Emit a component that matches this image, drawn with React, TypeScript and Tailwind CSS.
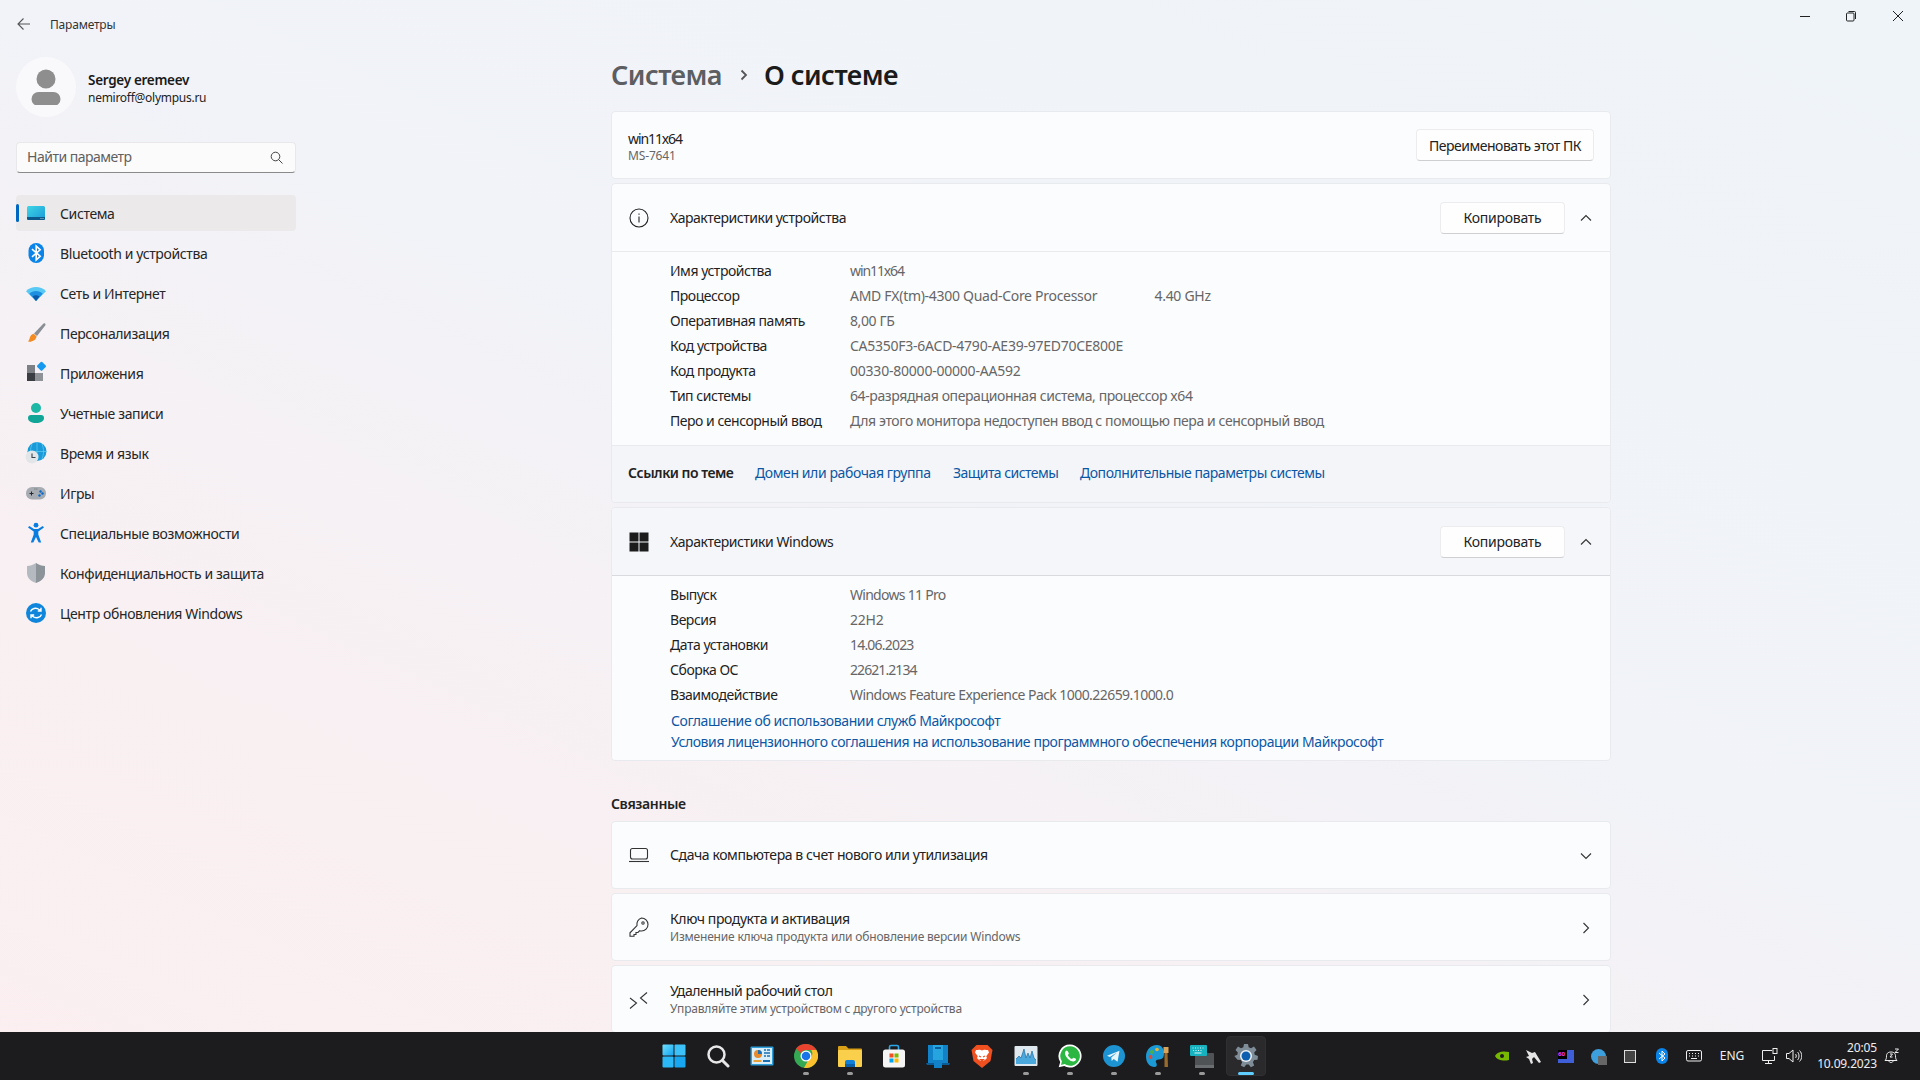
import React from "react";

const font = "font-['Noto_Sans','Open_Sans',sans-serif]";

function Ic({ s = 24, children, className = "" }: { s?: number; children: React.ReactNode; className?: string }) {
  return (
    <svg width={s} height={s} viewBox="0 0 24 24" fill="none" className={"shrink-0 " + className}>
      {children}
    </svg>
  );
}

const SysIcon = () => (
  <Ic>
    <defs>
      <linearGradient id="sys" x1="0" y1="0" x2="1" y2="1">
        <stop offset="0" stopColor="#3fd6e6" />
        <stop offset="1" stopColor="#1a9ad8" />
      </linearGradient>
    </defs>
    <rect x="3" y="5" width="18" height="14" rx="1.500" fill="url(#sys)" />
    <path d="M3 16h18v1.500a1.500 1.500 0 0 1-1.500 1.500h-15A1.500 1.500 0 0 1 3 17.500z" fill="#0c5a8c" />
    <path d="M16.500 17.500h1M18.500 17.500h1" stroke="#cfe8f4" strokeWidth=".8" />
  </Ic>
);
const BtIcon = () => (
  <Ic>
    <rect x="4.500" y="2" width="15.500" height="20" rx="7.700" fill="#0a84e8" />
    <path d="M8 8.200l8.200 7-4 3.800V5l4 3.800-8.200 7" stroke="#fff" strokeWidth="1.600" />
  </Ic>
);
const WifiIcon = () => (
  <Ic>
    <path d="M2 10.200C7.500 4.600 16.500 4.600 22 10.200L12 20z" fill="#58c8f5" />
    <path d="M5.300 12.800c3.800-3.600 9.600-3.600 13.400 0L12 20z" fill="#1c8fe0" />
    <path d="M8.600 15.400c2-1.700 4.800-1.700 6.800 0L12 20z" fill="#0b57a8" />
  </Ic>
);
const BrushIcon = () => (
  <Ic>
    <path d="M21 2.500c.7.600.7 1.300.2 2L13 15l-3-2.600L19 3c.6-.7 1.300-1 2-.5z" fill="#8a8f96" />
    <path d="M9.700 12.800l2.900 2.600c-.7 3.200-3.500 5.600-8.600 5.200 1.300-1.200 1.400-2.600 2-4.300.5-1.600 1.800-3 3.700-3.500z" fill="#f38a22" />
  </Ic>
);
const AppsIcon = () => (
  <Ic>
    <rect x="3" y="4" width="8" height="8" fill="#7d8186" />
    <rect x="3" y="12" width="8" height="8" fill="#3a3d42" />
    <rect x="11" y="12" width="8" height="8" fill="#8f9398" />
    <rect x="14" y="1.800" width="7" height="7" rx="1" transform="rotate(45 17.500 5.300)" fill="#1899f0" />
  </Ic>
);
const UserIcon = () => (
  <Ic>
    <circle cx="12" cy="7" r="5" fill="#1db7a6" />
    <path d="M4 17a3 3 0 0 1 3-3h10a3 3 0 0 1 3 3c0 3.500-3.500 5-8 5s-8-1.500-8-5z" fill="#10a596" />
  </Ic>
);
const TimeIcon = () => (
  <Ic>
    <circle cx="13" cy="10.500" r="9.500" fill="#1a9ad8" />
    <path d="M13 1v19M3.500 10.500h19M8 3c-2 5-2 10 0 15M18 3c2 5 2 10 0 15" stroke="#62d0f2" strokeWidth=".7" />
    <circle cx="8" cy="16" r="6.500" fill="#e3e6e8" />
    <path d="M8 12.500V16.500h3.500" stroke="#3c4146" strokeWidth="1.100" />
  </Ic>
);
const GameIcon = () => (
  <Ic>
    <rect x="2" y="6" width="20" height="12.500" rx="6" fill="#a6acb2" />
    <path d="M5.500 12.500h4M7.500 10.500v4" stroke="#26292c" strokeWidth="1" />
    <circle cx="16.500" cy="10.500" r="1.200" fill="#0a67c8" />
    <circle cx="18.500" cy="12.500" r="1.200" fill="#0a67c8" />
    <circle cx="15.500" cy="14.500" r="1.200" fill="#0a67c8" />
    <path d="M10.500 8h.8M12.500 8h.8" stroke="#444" strokeWidth=".8" />
  </Ic>
);
const AccIcon = () => (
  <Ic>
    <circle cx="12" cy="4.200" r="2.400" fill="#0a7ee0" />
    <path d="M4 6.500l5.700 4v3L6.800 21.500h2.500L12 16l2.700 5.500h2.500l-2.900-8v-3L20 6.500l-1.300-1.400-4.700 3h-4L5.300 5.100z" fill="#0a7ee0" />
  </Ic>
);
const ShieldIcon = () => (
  <Ic>
    <path d="M12 2c3 2 6 3 9 3v7c0 5-4 8.500-9 10z" fill="#8c9399" />
    <path d="M12 2C9 4 6 5 3 5v7c0 5 4 8.500 9 10z" fill="#b4babf" />
  </Ic>
);
const UpdateIcon = () => (
  <Ic>
    <circle cx="12" cy="12" r="10" fill="#0f86dc" />
    <path d="M6.500 10.500c1-3 5.500-4.500 9-1.700l1.500 1.200M17 6.800V10h-3.200M17.500 13.500c-1 3-5.500 4.500-9 1.700L7 14M7 17.200V14h3.200" stroke="#fff" strokeWidth="1.400" />
  </Ic>
);

const Win = () => (
  <svg width="24" height="24" viewBox="0 0 24 24">
    <defs>
      <linearGradient id="w" x1="0" y1="0" x2="1" y2="1">
        <stop offset="0" stopColor="#6fe0ff" />
        <stop offset="1" stopColor="#14a4f0" />
      </linearGradient>
    </defs>
    <rect x="0.500" y="0.500" width="11" height="11" rx="1" fill="url(#w)" />
    <rect x="12.500" y="0.500" width="11" height="11" rx="1" fill="#3cc2f8" />
    <rect x="0.500" y="12.500" width="11" height="11" rx="1" fill="#2ab8f6" />
    <rect x="12.500" y="12.500" width="11" height="11" rx="1" fill="#18a6f0" />
  </svg>
);
const Search = () => (
  <Ic>
    <circle cx="10.500" cy="10.500" r="8" stroke="#e8e8e8" strokeWidth="2.500" />
    <path d="M16.500 16.500l5.500 5.500" stroke="#e8e8e8" strokeWidth="3" strokeLinecap="round" />
  </Ic>
);
const Widgets = () => (
  <Ic>
    <rect x="0.500" y="2.500" width="23" height="19" rx="1" fill="#2f9fdc" />
    <rect x="2" y="4" width="20" height="16" fill="#d8eef8" />
    <circle cx="8" cy="10" r="4" fill="#e88b2c" />
    <path d="M8 10V6a4 4 0 0 1 4 4z" fill="#1d6fb0" />
    <path d="M14 6h2M17 6h3M14 9h6M14 12h2M17 12h3" stroke="#1d6fb0" strokeWidth="1.300" />
    <rect x="3.500" y="16" width="8" height="2" fill="#e8a33c" />
    <rect x="13" y="16" width="7" height="2" fill="#1d6fb0" />
  </Ic>
);
const Chrome = () => (
  <Ic>
    <circle cx="12" cy="12" r="12" fill="#35a853" />
    <path d="M12 0a12 12 0 0 1 10.400 6H12a6 6 0 0 0-5.200 3L2 4.500A12 12 0 0 1 12 0z" fill="#e8432f" />
    <path d="M22.400 6A12 12 0 0 1 10 23.800l5-8.800a6 6 0 0 0 2.200-8.900z" fill="#fbc02d" />
    <circle cx="12" cy="12" r="5.500" fill="#fff" />
    <circle cx="12" cy="12" r="4.300" fill="#1a73e8" />
  </Ic>
);
const Folder = () => (
  <Ic>
    <path d="M0 3a1 1 0 0 1 1-1h7l2.500 2.500H23a1 1 0 0 1 1 1V9H0z" fill="#d9a017" />
    <rect x="0" y="6" width="24" height="17" rx="1" fill="#f9cf4c" />
    <path d="M7 18a2 2 0 0 1 2-2h6a2 2 0 0 1 2 2v5H7z" fill="#0f7fd8" />
    <rect x="7" y="20" width="10" height="3" fill="#0b5ea8" />
  </Ic>
);
const Store = () => (
  <Ic>
    <path d="M7.500 6V3a1.500 1.500 0 0 1 1.500-1.500h6A1.500 1.500 0 0 1 16.500 3v3" stroke="#2aa7e8" strokeWidth="1.600" />
    <rect x="1" y="5.500" width="22" height="18" rx="2.500" fill="#f5f5f5" />
    <rect x="7.500" y="9.500" width="4" height="4" fill="#f25022" />
    <rect x="12.500" y="9.500" width="4" height="4" fill="#7fba00" />
    <rect x="7.500" y="14.500" width="4" height="4" fill="#00a4ef" />
    <rect x="12.500" y="14.500" width="4" height="4" fill="#ffb900" />
  </Ic>
);
const BlueApp = () => (
  <Ic>
    <path d="M2 1h20v18H2z" fill="#1182c8" />
    <path d="M7 1h10v15H7z" fill="#26a4e0" />
    <path d="M0 19h24l-1 2H1z" fill="#0a5c98" />
    <path d="M8 19h8v5H8z" fill="#1182c8" />
    <path d="M9 3h6v2H9z" fill="#0a5c98" />
  </Ic>
);
const Brave = () => (
  <Ic>
    <path d="M6.500 1h11L20 3.500 22.500 6 20.500 17 12 24 3.500 17 1.500 6 4 3.500z" fill="#f0501f" />
    <path d="M12 6.500c-1 0-1.500-.7-3-.7-1.200 0-2.200.5-3 .2L5 8.500l2.800 3.700L7 14c1 1.200 3 3 5 3s4-1.800 5-3l-.8-1.800L19 8.500 18 6c-.8.300-1.800-.2-3-.2-1.500 0-2 .7-3 .7z" fill="#fff" />
    <path d="M9 12l2 1M15 12l-2 1M10.500 15.500h3L12 17z" stroke="#f0501f" strokeWidth="1.200" />
  </Ic>
);
const TaskMgr = () => (
  <Ic>
    <rect x="0.500" y="2" width="23" height="20" rx="1" fill="#dfe8ee" />
    <path d="M2 20V15l3-3 2 2 3-9 2 9 2-5 2 5 2-7 2 7 2 2v4z" fill="#4ba8dc" />
    <path d="M2 15l3-3 2 2 3-9 2 9 2-5 2 5 2-7 2 7 2 2" stroke="#1f6fa8" strokeWidth=".7" />
  </Ic>
);
const WhatsApp = () => (
  <Ic>
    <path d="M12 .5A11.500 11.500 0 0 0 2.200 18L.7 23.300l5.500-1.400A11.500 11.500 0 1 0 12 .5z" fill="#fff" />
    <path d="M12 2.300A9.700 9.700 0 0 0 3.900 17.300L3 20.900l3.700-.9A9.700 9.700 0 1 0 12 2.300z" fill="#2bb741" />
    <path d="M8.800 6.500c-.6 0-1.800 1-1.800 2.800 0 2 1.300 3.800 2.600 5.200 1.700 1.700 4 3 5.600 3 1.700 0 2.800-1.200 2.900-2.300 0-.4-2.200-1.500-2.700-1.500-.5 0-1 1.200-1.500 1.200-1.200 0-4-2.600-4-3.800 0-.5.900-1 .9-1.500 0-.6-1.200-3.100-2-3.100z" fill="#fff" />
  </Ic>
);
const Telegram = () => (
  <Ic>
    <circle cx="12" cy="12" r="11" fill="#1d93d2" />
    <path d="M5 11.800l12.500-5-2 11-3.800-2.700-2 1.900-.4-3.400 5.700-5-7.200 4.300z" fill="#e8f5fb" />
  </Ic>
);
const Palette = () => (
  <Ic>
    <path d="M11 1C4 1 0 6.500 0 12.500 0 19 4 23 8.500 23c3 0 2.500-3 1.500-4.500-.9-1.500.5-3 2.500-3 2.500 0 5.500-.5 5.500-6C18 4 15 1 11 1z" fill="#1b9ad6" />
    <circle cx="6" cy="8" r="2" fill="#47b04b" />
    <circle cx="11" cy="5.500" r="1.800" fill="#e9b52c" />
    <circle cx="4.500" cy="13" r="1.900" fill="#e8472f" />
    <path d="M18.500 9h3l.5 14h-3.500z" fill="#9a6a2d" />
    <path d="M17.500 3h5v6h-5z" fill="#d8a35a" />
  </Ic>
);
const KeyPad = () => (
  <Ic>
    <rect x="5" y="9" width="19" height="15" rx="1" fill="#4f5356" />
    <rect x="5" y="21" width="19" height="3" fill="#6a6e71" />
    <rect x="0" y="1" width="17" height="11" rx="1" fill="#16b2c0" />
    <path d="M2.500 4h1M5 4h1M7.500 4h1M10 4h1M12.500 4h1M3 6.500h1M5.500 6.500h1M8 6.500h1M10.500 6.500h1M4.500 9h7" stroke="#d8f6f8" strokeWidth="1.100" />
  </Ic>
);
const Gear = () => (
  <svg width="24" height="24" viewBox="0 0 24 24">
    <path d="M10 0h4l.7 3.300 2.300 1L20 2.500 22.500 6l-2.300 2.400.5 2.400 3.300 1.200-.5 3.700-3.400.4-1.200 2.200 1.300 3.100-3.300 1.800-2.200-2.700h-2.400l-2.200 2.700-3.300-1.800 1.300-3.100-1.200-2.200-3.400-.4L.3 12l3-1.200.5-2.400L1.500 6 4 2.500 7 4.300l2.300-1z" fill="#7f8d99" />
    <circle cx="12" cy="12" r="6" fill="#eef3f6" />
    <circle cx="12" cy="12" r="4.500" fill="#0f5fb0" />
  </svg>
);

const nav: [React.ReactNode, string][] = [
  [<SysIcon />, "Система"],
  [<BtIcon />, "Bluetooth и устройства"],
  [<WifiIcon />, "Сеть и Интернет"],
  [<BrushIcon />, "Персонализация"],
  [<AppsIcon />, "Приложения"],
  [<UserIcon />, "Учетные записи"],
  [<TimeIcon />, "Время и язык"],
  [<GameIcon />, "Игры"],
  [<AccIcon />, "Специальные возможности"],
  [<ShieldIcon />, "Конфиденциальность и защита"],
  [<UpdateIcon />, "Центр обновления Windows"],
];

function Sidebar() {
  return (
    <aside className="w-[296px] ml-4 shrink-0 flex flex-col">
      <div className="h-[48px] flex items-center gap-[18px]">
        <svg width="16" height="16" viewBox="0 0 16 16" fill="none" stroke="#555" strokeWidth="1.100">
          <path d="M14 8H2M7.500 2.500L2 8l5.500 5.500" />
        </svg>
        <span className="text-[12px] pt-[1px] text-[#333] tracking-[-0.2px]">Параметры</span>
      </div>
      <div className="flex items-center mt-[9px] h-[60px]">
        <div className="w-[60px] h-[60px] rounded-full bg-[#f9f9fb] flex items-center justify-center">
          <svg width="30" height="36" viewBox="0 0 30 36" fill="#8e8e8e">
            <circle cx="15" cy="10" r="9.500" />
            <rect x="0.500" y="23" width="29" height="14" rx="7" />
          </svg>
        </div>
        <div className="ml-[12px] pt-[2px] flex flex-col">
          <span className="text-[13.500px] leading-[18px] font-semibold text-[#1a1a1a] tracking-[-0.3px]">Sergey eremeev</span>
          <span className="text-[12px] leading-[17px] text-[#222] tracking-[-0.27px]">nemiroff@olympus.ru</span>
        </div>
      </div>
      <div className="mt-[25px] h-[31px] w-[280px] rounded-[4px] bg-[#fbfbfc] border border-[#e8e8ea] border-b-[#8a8a8a] flex items-center justify-between pl-[10px] pr-[12px]">
        <span className="text-[14px] text-[#5f5f5f] tracking-[-0.5px] -mt-[2px]">Найти параметр</span>
        <svg width="13" height="13" viewBox="0 0 13 13" fill="none" stroke="#444" strokeWidth="1">
          <circle cx="5.500" cy="5.500" r="4.300" />
          <path d="M8.500 8.500l4 4" />
        </svg>
      </div>
      <nav className="mt-[22px] flex flex-col gap-1 w-[280px]">
        {nav.map(([icon, label], i) => (
          <div key={label} className={"relative h-9 flex items-center rounded-[4px] pl-[8px] gap-[12px] " + (i === 0 ? "bg-[#ece9eb]" : "")}>
            {i === 0 && <span className="absolute left-0 top-[9px] h-[18px] w-[3px] rounded-full bg-[#0067c0]" />}
            {icon}
            <span className="text-[14px] text-[#262626] tracking-[-0.38px]">{label}</span>
          </div>
        ))}
      </nav>
    </aside>
  );
}

function Row({ k, v, extra, t = "tracking-[-0.39px]" }: { k: string; v: string; extra?: string; t?: string }) {
  return (
    <div className="h-[25px] flex items-center text-[14px]">
      <span className="w-[180px] text-[#1f1f1f] tracking-[-0.47px]">{k}</span>
      <span className={"text-[#666] " + t + (extra ? " w-[304.500px]" : "")}>{v}</span>
      {extra && <span className="text-[#666] tracking-[-0.3px]">{extra}</span>}
    </div>
  );
}

function Btn({ children, w, t = "tracking-[-0.25px]" }: { children: React.ReactNode; w: string; t?: string }) {
  return (
    <div className={"h-8 rounded-[4px] bg-[#fefefe] border border-[#ececee] border-b-[#cfcfd2] flex items-center justify-center text-[14px] text-[#222] " + t + " " + w}>
      {children}
    </div>
  );
}

const Up = () => (
  <svg width="12" height="12" viewBox="0 0 12 12" fill="none" stroke="#333" strokeWidth="1.100" className="ml-[15px] mr-[6px]">
    <path d="M1 8.500L6 3.500l5 5" />
  </svg>
);
const Cv = ({ d }: { d: string }) => (
  <svg width="12" height="12" viewBox="0 0 12 12" fill="none" stroke="#333" strokeWidth="1.100" className="mr-[6px] mt-[1px]">
    <path d={d} />
  </svg>
);
const cardC = "rounded-[4px] border border-[#e8eaee] bg-[#fbfcfe]";
const link = "text-[14px] text-[#0b57a4] tracking-[-0.4px]";

function LinkRow({ icon, title, sub, d }: { icon: React.ReactNode; title: string; sub?: string; d: string }) {
  return (
    <div className={cardC + " h-[68px] shrink-0 flex items-center pl-[17px] pr-[12px]"}>
      <span className="w-[41px] shrink-0">{icon}</span>
      <div className="flex-1 flex flex-col">
        <span className="text-[14px] leading-[20px] text-[#222] tracking-[-0.41px]">{title}</span>
        {sub && <span className="text-[12px] leading-[16px] text-[#666] tracking-[-0.19px]">{sub}</span>}
      </div>
      <Cv d={d} />
    </div>
  );
}

function Content() {
  return (
    <main className="w-[1000px] ml-[299px] shrink-0 flex flex-col overflow-hidden">
      <div className="h-[111px] shrink-0 flex items-center pt-[38px] text-[27px] font-semibold leading-none tracking-[-0.55px]">
        <span className="text-[#5c5e61]">Система</span>
        <svg width="10" height="12" viewBox="0 0 10 12" fill="none" stroke="#555" strokeWidth="1.800" className="ml-[17px] mr-[15px]">
          <path d="M2.500 1.500L7 6l-4.500 4.500" />
        </svg>
        <span className="text-[#1b1b1b]">О системе</span>
      </div>
      <div className={cardC + " h-[68px] shrink-0 flex items-center justify-between pl-[16px] pr-[16px]"}>
        <div className="flex flex-col pt-[2px]">
          <span className="text-[14px] leading-[19px] text-[#222] tracking-[-1.100px]">win11x64</span>
          <span className="text-[12px] leading-[16px] text-[#666] tracking-[-0.15px]">MS-7641</span>
        </div>
        <Btn w="w-[178px]" t="tracking-[-0.48px]">Переименовать этот ПК</Btn>
      </div>
      <div className={cardC + " mt-1 shrink-0 overflow-hidden"}>
        <div className="h-[68px] flex items-center pl-[17px] pr-[12px] border-b border-[#e8eaee]">
          <span className="w-[41px]">
            <svg width="20" height="20" viewBox="0 0 20 20" fill="none" stroke="#222" strokeWidth="1.100">
              <circle cx="10" cy="10" r="9" />
              <path d="M10 8.500V14.500M10 5.500v1.300" />
            </svg>
          </span>
          <span className="flex-1 text-[14px] text-[#222] tracking-[-0.46px]">Характеристики устройства</span>
          <Btn w="w-[125px]">Копировать</Btn>
          <Up />
        </div>
        <div className="pl-[58px] pt-[6px] h-[193px]">
          <Row k="Имя устройства" v="win11x64" t="tracking-[-1.100px]" />
          <Row k="Процессор" v="AMD FX(tm)-4300 Quad-Core Processor" extra="4.40 GHz" t="tracking-[-0.29px]" />
          <Row k="Оперативная память" v="8,00 ГБ" />
          <Row k="Код устройства" v="CA5350F3-6ACD-4790-AE39-97ED70CE800E" t="tracking-[-0.25px]" />
          <Row k="Код продукта" v="00330-80000-00000-AA592" t="tracking-[-0.22px]" />
          <Row k="Тип системы" v="64-разрядная операционная система, процессор x64" />
          <Row k="Перо и сенсорный ввод" v="Для этого монитора недоступен ввод с помощью пера и сенсорный ввод" />
        </div>
        <div className="h-[57px] pb-[4px] border-t border-[#e8eaee] bg-[#f3f5f8] flex items-center pl-[16px]">
          <span className="w-[127px] text-[14px] font-semibold text-[#222] tracking-[-0.5px]">Ссылки по теме</span>
          <span className={link + " w-[198px]"}>Домен или рабочая группа</span>
          <span className={link + " w-[127px] tracking-[-0.55px]"}>Защита системы</span>
          <span className="text-[14px] text-[#0b57a4] tracking-[-0.46px]">Дополнительные параметры системы</span>
        </div>
      </div>
      <div className={cardC + " mt-1 shrink-0 overflow-hidden"}>
        <div className="h-[68px] flex items-center pl-[17px] pr-[12px] border-b border-[#d8dadf] bg-[#f4f6fa]">
          <span className="w-[41px]">
            <svg width="20" height="20" viewBox="0 0 20 20" fill="#1c1c1c">
              <rect x="0.500" y="0.500" width="9" height="9" />
              <rect x="10.500" y="0.500" width="9" height="9" />
              <rect x="0.500" y="10.500" width="9" height="9" />
              <rect x="10.500" y="10.500" width="9" height="9" />
            </svg>
          </span>
          <span className="flex-1 text-[14px] text-[#222] tracking-[-0.42px]">Характеристики Windows</span>
          <Btn w="w-[125px]">Копировать</Btn>
          <Up />
        </div>
        <div className="pl-[58px] pt-[6px] h-[184px] flex flex-col">
          <Row k="Выпуск" v="Windows 11 Pro" t="tracking-[-0.72px]" />
          <Row k="Версия" v="22H2" t="tracking-[-0.22px]" />
          <Row k="Дата установки" v="14.06.2023" t="tracking-[-0.8px]" />
          <Row k="Сборка ОС" v="22621.2134" t="tracking-[-0.92px]" />
          <Row k="Взаимодействие" v="Windows Feature Experience Pack 1000.22659.1000.0" t="tracking-[-0.56px]" />
          <span className={link + " leading-[21px] mt-[3px] pl-[1px]"}>Соглашение об использовании служб Майкрософт</span>
          <span className={link + " leading-[21px] pl-[1px]"}>Условия лицензионного соглашения на использование программного обеспечения корпорации Майкрософт</span>
        </div>
      </div>
      <div className="h-[60px] shrink-0 flex items-end pb-[7px] text-[14px] font-semibold text-[#222] tracking-[-0.38px]">Связанные</div>
      <div className="flex flex-col gap-1">
        <LinkRow
          d="M1 3.500L6 8.500l5-5"
          title="Сдача компьютера в счет нового или утилизация"
          icon={
            <svg width="20" height="20" viewBox="0 0 20 20" fill="none" stroke="#333" strokeWidth="1.100">
              <rect x="1.500" y="3.500" width="17" height="10.500" rx="2" />
              <path d="M0 16.500h20" />
            </svg>
          }
        />
        <LinkRow
          d="M3.500 1l5 5-5 5"
          title="Ключ продукта и активация"
          sub="Изменение ключа продукта или обновление версии Windows"
          icon={
            <svg width="20" height="20" viewBox="0 0 20 20" fill="none" stroke="#333" strokeWidth="1.100">
              <path d="M12.500 1a6.500 6.500 0 0 1 0 13c-.7 0-1.300-.1-1.800-.3L9 15.500H7v2H5v1.800H1v-3.500l7-7.100A6.500 6.500 0 0 1 12.500 1z" />
              <circle cx="14" cy="6" r="1.200" />
            </svg>
          }
        />
        <LinkRow
          d="M3.500 1l5 5-5 5"
          title="Удаленный рабочий стол"
          sub="Управляйте этим устройством с другого устройства"
          icon={
            <svg width="20" height="20" viewBox="0 0 20 20" fill="none" stroke="#333" strokeWidth="1.100">
              <path d="M1 9l6.500 5L1 19.500M18 3.500L11.500 9l6.500 5.500" />
            </svg>
          }
        />
      </div>
    </main>
  );
}

const apps: [React.ReactNode, boolean][] = [
  [<Win />, false],
  [<Search />, false],
  [<Widgets />, false],
  [<Chrome />, true],
  [<Folder />, true],
  [<Store />, false],
  [<BlueApp />, false],
  [<Brave />, false],
  [<TaskMgr />, true],
  [<WhatsApp />, true],
  [<Telegram />, true],
  [<Palette />, true],
  [<KeyPad />, true],
];

function Taskbar() {
  return (
    <footer className="h-[48px] shrink-0 bg-[#1c1c1f] grid grid-cols-[1fr_auto_1fr] items-center text-white">
      <div />
      <div className="flex h-full items-center">
        {apps.map(([ic, dot], i) => (
          <div key={i} className="relative w-[44px] h-[40px] flex items-center justify-center">
            {ic}
            {dot && <span className="absolute bottom-[1px] left-[19px] w-[6px] h-[3px] rounded-full bg-[#9a9a9a]" />}
          </div>
        ))}
        <div className="relative w-[44px] h-[40px] flex items-center justify-center">
          <div className="absolute inset-x-[2px] inset-y-0 rounded-[4px] bg-[#2a2a2d] border border-[#303033]" />
          <span className="relative"><Gear /></span>
          <span className="absolute bottom-[1px] left-[14px] w-[16px] h-[3px] rounded-full bg-[#60cdff]" />
        </div>
      </div>
      <div className="flex items-center justify-end h-full">
        <div className="w-[32px] flex justify-center"><svg width="14" height="10" viewBox="0 0 14 10"><path d="M0 5c3-5 9-5 14-4v8C9 10 3 10 0 5z" fill="#76b900" /><circle cx="7" cy="5" r="2" fill="#1c1c1f" /></svg></div>
        <div className="w-[32px] flex justify-center"><svg width="16" height="16" viewBox="0 0 16 16"><path d="M0 2l6 3 3-1 6 10-2 1-5-6-2 2 1 4-2 1-2-5-3-2 3-1z" fill="#e4e4e4" /></svg></div>
        <div className="w-[32px] flex justify-center"><div className="relative w-[16px] h-[13px] bg-[#3f5fd8]"><span className="absolute left-0 top-0 w-[9px] h-[9px] bg-black text-[#ff3cf0] text-[6px] leading-[9px] font-bold">60</span></div></div>
        <div className="w-[32px] flex justify-center"><div className="relative w-[15px] h-[15px] rounded-full bg-[#3d9fdc]"><span className="absolute right-[-1px] bottom-[-1px] w-[9px] h-[9px] bg-[#666]" /></div></div>
        <div className="w-[32px] flex justify-center"><div className="w-[12px] h-[13px] bg-[#444] border border-[#ddd]" /></div>
        <div className="w-[32px] flex justify-center"><svg width="12" height="16" viewBox="0 0 12 16"><rect width="12" height="16" rx="6" fill="#0a84e8" /><path d="M3 5l6 5-3 3V3l3 3-6 5" stroke="#fff" strokeWidth="1" fill="none" /></svg></div>
        <div className="w-[32px] flex justify-center"><svg width="16" height="12" viewBox="0 0 16 12" fill="none" stroke="#eee" strokeWidth="1"><rect x=".5" y=".5" width="15" height="10.500" rx="1.500" /><path d="M3 3.500h1M6 3.500h1M9 3.500h1M12 3.500h1M3 6h1M6 6h1M9 6h1M12 6h1M5 8.500h6" /></svg></div>
        <span className="w-[44px] text-center text-[12px] text-[#eee]">ENG</span>
        <div className="w-[32px] flex justify-center"><svg width="16" height="16" viewBox="0 0 16 16" fill="none" stroke="#eee" strokeWidth="1"><path d="M10 2.500H.5v10h12V8M6.500 12.500v3M3 15.500h7" /><rect x="11" y=".5" width="4" height="5" /></svg></div>
        <div className="w-[16px] flex justify-center"><svg width="16" height="14" viewBox="0 0 16 14" fill="none" stroke="#eee" strokeWidth="1"><path d="M.5 4.500h2.500L7 1v12L3 9.500H.5zM9.500 5c1 1 1 3 0 4M11.500 3c2 2 2 6 0 8M13.500 1.500c3 3 3 8 0 11" /></svg></div>
        <div className="w-[75px] flex flex-col items-end text-[12px] leading-[16px] text-[#eee] tracking-[-0.15px]"><span>20:05</span><span>10.09.2023</span></div>
        <div className="w-[30px] mr-[13px] flex justify-center"><svg width="16" height="16" viewBox="0 0 16 16" fill="none" stroke="#eee" strokeWidth="1"><path d="M1 12.500h12c-1-1-1.500-2-1.500-4.500 0-2-1-4-4.500-4S2.500 6 2.500 8c0 2.500-.5 3.500-1.500 4.500zM5 13c0 2 4 2 4 0" /><path d="M6 6h2.500L6 9h2.500M11 1h3.500L11 4.500h3.500" /></svg></div>
      </div>
    </footer>
  );
}

export default function App() {
  return (
    <div className={"relative w-[1920px] h-[1080px] overflow-hidden flex flex-col text-[#222] " + font + " bg-[linear-gradient(25deg,#fbeff0_0%,#f8f0f2_28%,#f1f3f8_55%,#eff4f8_100%)]"}>
      <div className="flex-1 flex min-h-0">
        <Sidebar />
        <Content />
      </div>
      <div className="absolute right-[16px] top-[9px] flex gap-[36px]">
        <svg width="10" height="14" viewBox="0 0 10 14" stroke="#222" strokeWidth="1"><path d="M0 7.500h10" /></svg>
        <svg width="10" height="14" viewBox="0 0 10 14" fill="none" stroke="#222" strokeWidth="1"><rect x=".5" y="4" width="7.500" height="8" rx="1" /><path d="M2.500 2.500h6a1 1 0 0 1 1 1V10" /></svg>
        <svg width="12" height="14" viewBox="0 0 12 14" fill="none" stroke="#222" strokeWidth="1"><path d="M1 2l10 10M11 2L1 12" /></svg>
      </div>
      <Taskbar />
    </div>
  );
}
